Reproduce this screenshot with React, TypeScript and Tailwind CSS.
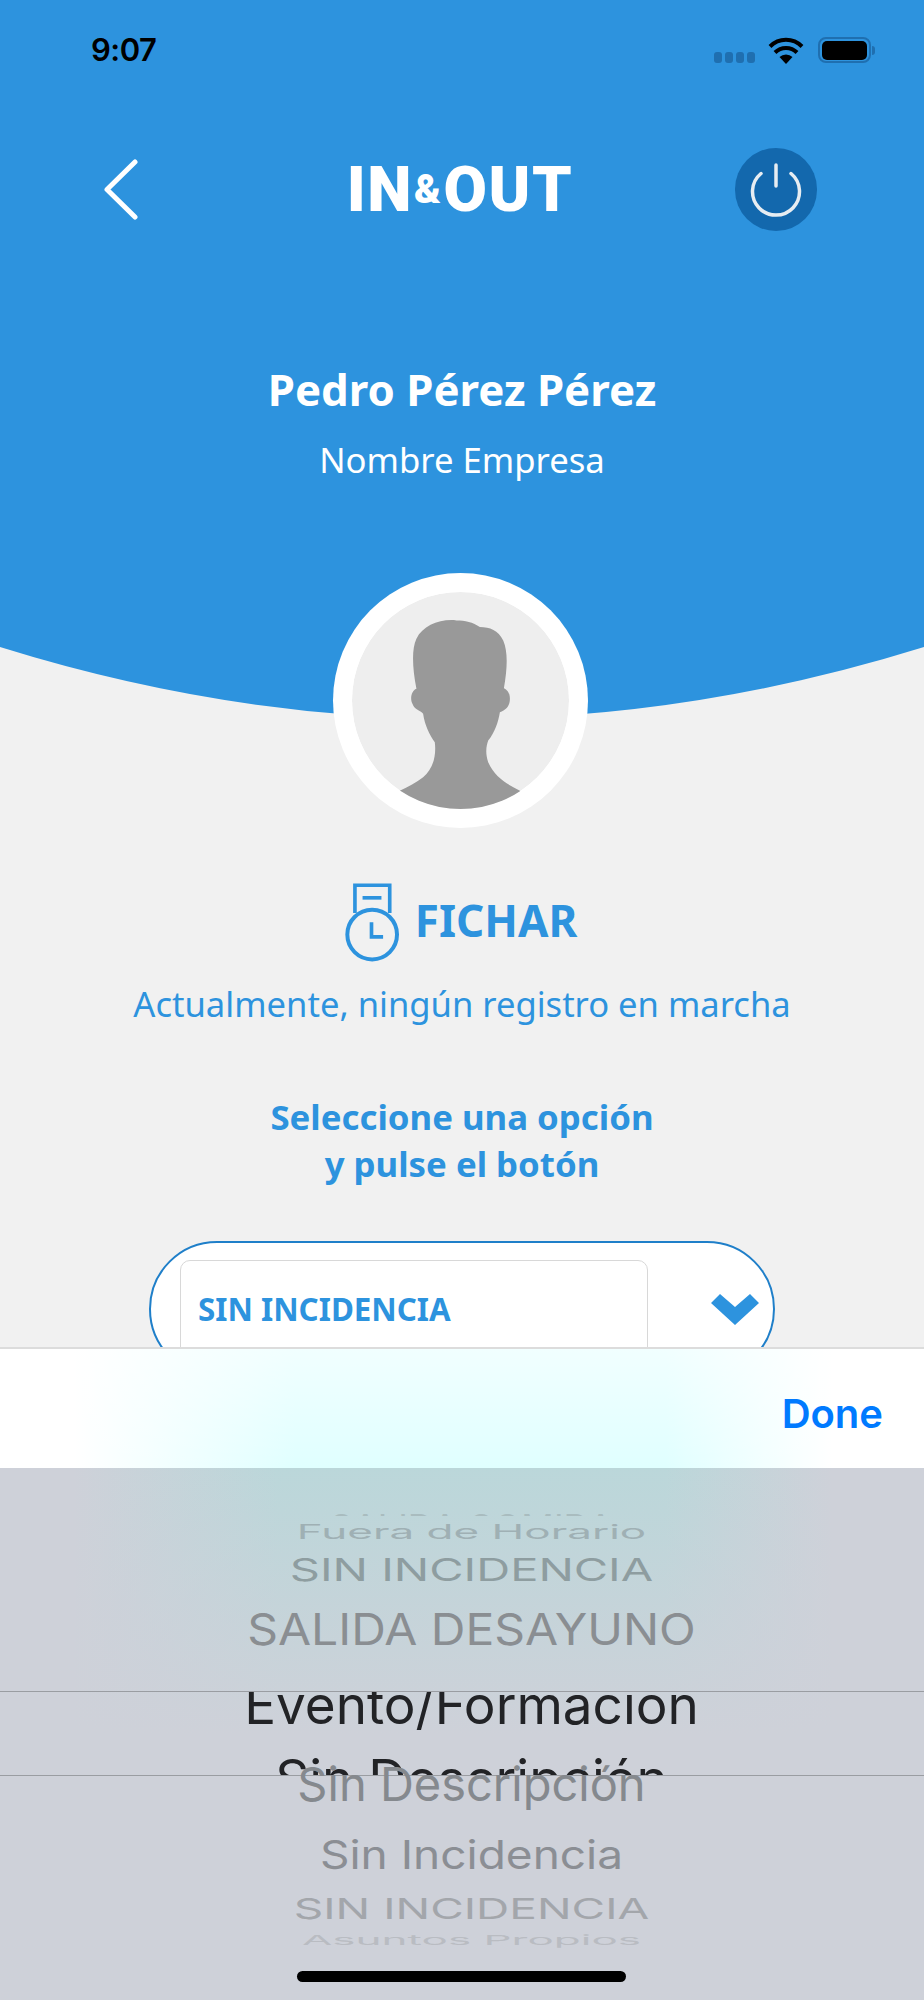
export default function App() {
  const sans = "[font-family:'Noto_Sans',sans-serif]";
  const wheel = "[font-family:Inter,'Liberation_Sans',sans-serif]";
  return (
    <div className={`relative h-[2000px] w-[924px] overflow-hidden bg-[#f1f1f1] ${sans}`}>
      <div className="flex h-[647px] flex-col bg-[#2d93de]">
        <div className="mt-[37px] flex h-[26px] items-center justify-between pl-[91px] pr-[49px]">
          <span className="text-[31px] leading-[26px] font-semibold tracking-[-0.5px] text-black [font-family:Inter,sans-serif]">9:07</span>
          <div className="flex items-center">
            <div className="mt-[14px] flex gap-[3px]">
              <i className="h-[11px] w-[8px] rounded-[3px] bg-[#1f6fb0]" />
              <i className="h-[11px] w-[8px] rounded-[3px] bg-[#1f6fb0]" />
              <i className="h-[11px] w-[8px] rounded-[3px] bg-[#1f6fb0]" />
              <i className="h-[11px] w-[8px] rounded-[3px] bg-[#1f6fb0]" />
            </div>
            <svg className="ml-[13px]" width="36" height="27" viewBox="0 0 36 27">
              <path d="M18 27 L11.5 20 A9.5 9.5 0 0 1 24.5 20 Z" fill="#000" />
              <path d="M7 15.5 A15.5 15.5 0 0 1 29 15.5" fill="none" stroke="#000" strokeWidth="4" />
              <path d="M2 9.5 A22.5 22.5 0 0 1 34 9.5" fill="none" stroke="#000" strokeWidth="4" />
            </svg>
            <div className="ml-[14px] flex h-[26px] w-[53px] items-center justify-center rounded-[8px] border-2 border-[#1f6fb0]">
              <div className="h-[19px] w-[45px] rounded-[5px] bg-black" />
            </div>
            <div className="ml-[1px] h-[9px] w-[3px] rounded-r-[3px] bg-[#1f6fb0]" />
          </div>
        </div>
        <div className="mt-[85px] grid grid-cols-[1fr_auto_1fr] items-center pl-[103px] pr-[107px]">
          <svg width="35" height="61" viewBox="0 0 35 61">
            <path d="M32 3 L4 30.5 L32 58" fill="none" stroke="#fff" strokeWidth="5" strokeLinecap="round" strokeLinejoin="round" />
          </svg>
          <div className="flex h-[45px] w-[223px] items-center justify-center text-[63px] leading-[45px] font-black tracking-[1.5px] text-white [font-family:Roboto,sans-serif]">
            <span>IN</span>
            <span className="mx-[1px] text-[40px]">&amp;</span>
            <span>OUT</span>
          </div>
          <div className="flex h-[83px] w-[82px] items-center justify-center justify-self-end rounded-full bg-[#1368ad]">
            <svg width="54" height="54" viewBox="0 0 54 54">
              <path d="M27 2 V23" fill="none" stroke="#e7edf2" strokeWidth="3.5" strokeLinecap="round" />
              <path d="M12 10.5 A23.5 23.5 0 1 0 42 10.5" fill="none" stroke="#e7edf2" strokeWidth="3.5" strokeLinecap="round" />
            </svg>
          </div>
        </div>
        <div className="mt-[133px] h-[50px] text-center text-[43.8px] leading-[50px] font-bold text-white">Pedro Pérez Pérez</div>
        <div className="mt-[24px] h-[44px] text-center text-[34.7px] leading-[44px] text-white">Nombre Empresa</div>
      </div>
      <svg className="block" width="924" height="72" viewBox="0 0 924 72">
        <path d="M0 0 Q462 144 924 0 Z" fill="#2d93de" />
      </svg>
      <div className="relative ml-[333px] mt-[-146px] flex h-[255px] w-[255px] items-center justify-center rounded-full bg-white">
        <svg width="217" height="217" viewBox="157 100 650 650" className="rounded-full">
          <circle cx="482" cy="425" r="325" fill="#eeeeee" />
          <path
            d="M470 185 C420 180 370 200 350 240 C335 270 338 330 350 390 C335 395 330 420 338 435 C345 455 365 455 370 465 C375 500 390 530 405 550 C410 590 400 630 370 655 C350 670 325 685 300 695 L300 760 L660 760 L660 695 C620 675 585 655 565 610 C555 580 560 560 565 545 C585 520 595 490 600 460 C615 455 630 445 630 420 C630 400 620 392 612 388 C622 330 625 280 610 245 C595 215 570 205 540 205 C520 190 495 185 470 185 Z"
            fill="#999999"
          />
        </svg>
      </div>
      <div className="mt-[55px] flex h-[79px] items-center justify-center gap-[16px] pr-[2px]">
        <svg width="54" height="79" viewBox="135 970 163 237">
          <path d="M165 1060 V976 H270 V1060" fill="none" stroke="#2d93de" strokeWidth="11" />
          <path d="M188 1014 H245" fill="none" stroke="#2d93de" strokeWidth="11" />
          <circle cx="217" cy="1125" r="75" fill="none" stroke="#2d93de" strokeWidth="12" />
          <path d="M215 1088 V1132 H250" fill="none" stroke="#2d93de" strokeWidth="11" />
        </svg>
        <span className="mb-[5px] text-[44px] leading-[50px] font-bold text-[#2d93de]">FICHAR</span>
      </div>
      <div className="mt-[20px] h-[44px] text-center text-[34.6px] leading-[44px] text-[#2d93de]">Actualmente, ningún registro en marcha</div>
      <div className="mt-[67px] text-center text-[34.8px] leading-[47px] font-bold text-[#2d93de]">
        <div>Seleccione una opción</div>
        <div>y pulse el botón</div>
      </div>
      <div className="ml-[149px] mt-[54px] flex h-[136px] w-[626px] items-center rounded-full border-2 border-[#1f7fc9] bg-white pl-[29px]">
        <div className="flex h-[98px] w-[468px] items-center rounded-[10px] border border-[#d8d8d8] pl-[17px] text-[31.3px] font-bold text-[#2d93de]">SIN INCIDENCIA</div>
        <svg className="ml-[63px]" width="48" height="31" viewBox="0 0 48 31">
          <path d="M0 9 L9 0 L24 13 L39 0 L48 9 L24 31 Z" fill="#2d93de" />
        </svg>
      </div>

      <div className="absolute inset-x-0 bottom-0 flex h-[653px] flex-col">
        <div className="flex h-[121px] items-center justify-end border-t-2 border-[#dcdcdc] bg-[linear-gradient(to_bottom,rgba(255,255,255,0.55),rgba(255,255,255,0)),linear-gradient(to_right,#ffffff_8%,#e0ffff_32%,#e0ffff_72%,#ffffff_90%)] pr-[41px] pt-[11px]">
          <span className="text-[40px] font-semibold text-[#007aff] [font-family:Inter,sans-serif]">Done</span>
        </div>
        <div className={`relative flex flex-1 flex-col items-center bg-[linear-gradient(to_bottom,rgba(206,209,217,0)_0%,#ced1d9_50%),linear-gradient(to_right,#ced1d9_8%,#bbd7da_30%,#bbd7da_72%,#ced1d9_90%)] pl-[19px] pt-[45px] ${wheel}`}>
          <div className="h-[3px] overflow-hidden text-[36px] leading-[28px] text-[#a9bcbf]">SALIDA COMIDA</div>
          <div className="mt-[1px] flex h-[29px] items-center text-[44px] text-[#9fb0b4] scale-y-[0.44]">Fuera de Horario</div>
          <div className="flex h-[48px] items-center text-[47px] text-[#8e9da0] scale-y-[0.67]">SIN INCIDENCIA</div>
          <div className="flex h-[70px] items-center text-[48px] text-[#8a8e92] scale-y-[0.92]">SALIDA DESAYUNO</div>
          <div className="mt-[22px] h-[5px] w-[924px] ml-[-19px] overflow-hidden pl-[19px] text-center text-[49px] leading-[60px] text-[#85898e]">Evento/Formación</div>
          <div className="ml-[-19px] h-[85px] w-[924px] overflow-hidden border-y border-[#9a9da2] pl-[19px] text-center text-[#222326]">
            <div className="flex h-[27px] items-center justify-center text-[53px]">Evento/Formación</div>
            <div className="flex h-[122px] items-center justify-center text-[53px]">Sin Descripción</div>
          </div>
          <div className="mt-[-16px] flex h-[48px] items-center text-[47px] text-[#85898e]">Sin Descripción</div>
          <div className="mt-[3px] flex h-[88px] items-center text-[46px] text-[#8b8e94] scale-y-[0.85]">Sin Incidencia</div>
          <div className="mt-[-3px] flex h-[24px] items-center text-[46px] text-[#a3a6ab] scale-y-[0.63]">SIN INCIDENCIA</div>
          <div className="flex h-[40px] items-center text-[44px] text-[#b9bcc2] scale-y-[0.31]">Asuntos Propios</div>
          <div className="absolute bottom-[18px] left-[297px] h-[11px] w-[329px] rounded-full bg-black" />
        </div>
      </div>
    </div>
  );
}
